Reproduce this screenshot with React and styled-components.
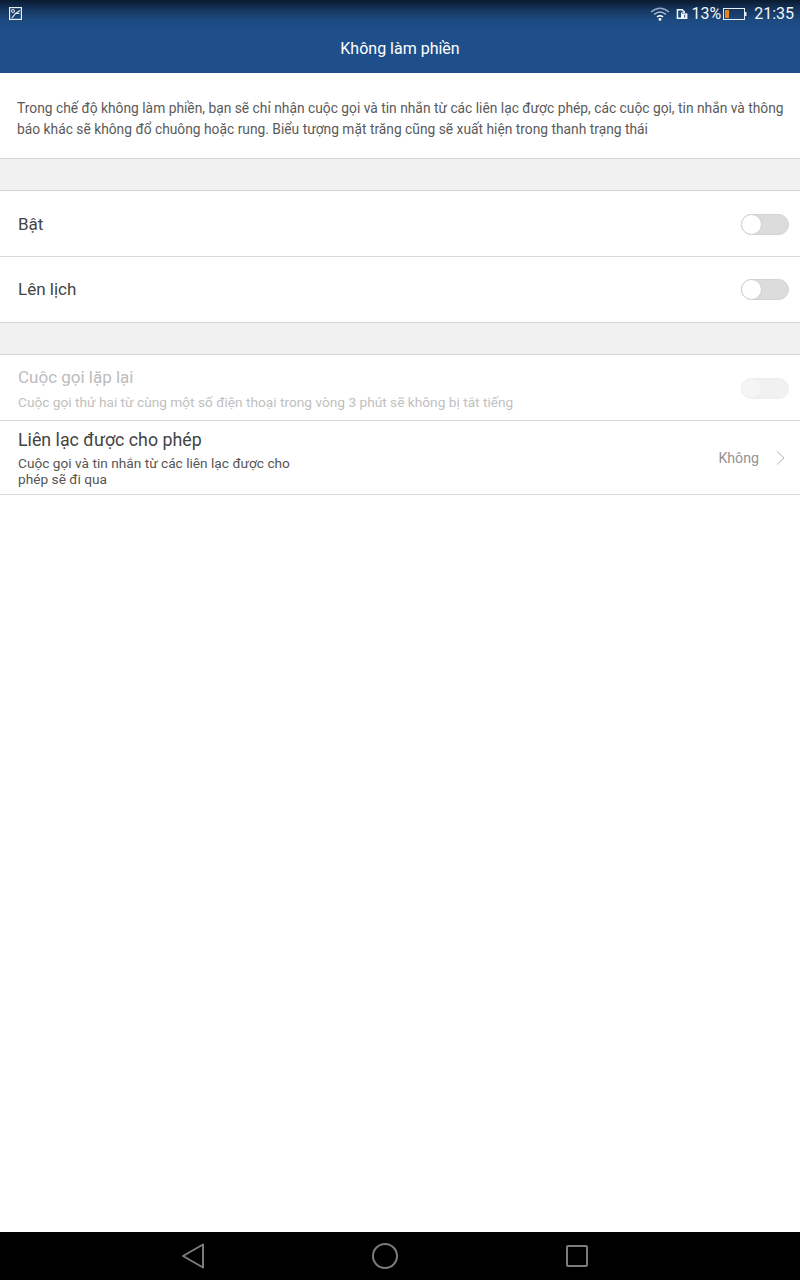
import styled, { createGlobalStyle } from "styled-components";

const GlobalStyle = createGlobalStyle`
  html, body {
    margin: 0;
    padding: 0;
    background: #fff;
    font-family: Roboto, "Noto Sans", sans-serif;
  }
`;

const Screen = styled.div`
  width: 800px;
  height: 1280px;
  display: flex;
  flex-direction: column;
  overflow: hidden;
  background: #fff;
`;

const Header = styled.header`
  height: 73px;
  flex: none;
  display: flex;
  flex-direction: column;
  background: linear-gradient(to bottom, #0b1a30 0, #16365f 10px, #1c4a80 20px, #1f4f8b 30px, #1f4f8b 73px);
`;

const StatusBar = styled.div`
  height: 27px;
  display: flex;
  align-items: center;
  justify-content: space-between;
  padding: 0 6px 0 9px;
  color: #fff;
`;

const StatusRight = styled.div`
  display: flex;
  align-items: center;
`;

const StatusIcon = styled.svg`
  display: block;
  flex: none;
  margin-left: ${(props) => props.$left || 0}px;
  margin-top: ${(props) => props.$top || 0}px;
`;

const StatusText = styled.span`
  font-size: 16px;
  line-height: 27px;
  color: #f2f5f9;
  margin-left: ${(props) => props.$left || 0}px;
`;

const Title = styled.h1`
  margin: 0;
  height: 46px;
  font-size: 16px;
  font-weight: 400;
  line-height: 43px;
  text-align: center;
  color: #fff;
`;

const Intro = styled.p`
  margin: 0;
  height: 85px;
  box-sizing: border-box;
  padding: 25px 10px 0 17px;
  font-size: 13.8px;
  line-height: 21px;
  color: #5a5a5a;
`;

const Spacer = styled.div`
  height: 33px;
  flex: none;
  box-sizing: border-box;
  background: #f1f1f1;
  border-top: 1px solid #d4d4d4;
  border-bottom: 1px solid #d4d4d4;
`;

const Row = styled.div`
  height: ${(props) => props.$height}px;
  flex: none;
  box-sizing: border-box;
  display: flex;
  align-items: center;
  justify-content: space-between;
  padding: ${(props) => props.$nudge || 0}px 11px ${(props) => props.$lift || 0}px 18px;
  border-bottom: ${(props) => (props.$last ? "none" : "1px solid #d9d9d9")};
`;

const RowText = styled.div`
  display: flex;
  flex-direction: column;
`;

const RowTitle = styled.div`
  font-size: ${(props) => props.$size || 17}px;
  line-height: 22px;
  color: ${(props) => (props.$disabled ? "#bcbcbc" : "#444")};
`;

const RowNote = styled.div`
  font-size: 13.7px;
  line-height: ${(props) => (props.$disabled ? 17 : 16)}px;
  margin-top: ${(props) => (props.$disabled ? 6 : 4)}px;
  max-width: ${(props) => props.$width || 600}px;
  color: ${(props) => (props.$disabled ? "#c0c0c0" : "#555")};
`;

const Toggle = styled.div`
  position: relative;
  width: 48px;
  height: 21px;
  box-sizing: border-box;
  border-radius: 11px;
  background: ${(props) => (props.$disabled ? "#f1f1f1" : "#dcdcdc")};
  border: 1px solid ${(props) => (props.$disabled ? "#ededed" : "#d2d2d2")};

  &::before {
    content: "";
    position: absolute;
    left: -1px;
    top: -1px;
    width: 21px;
    height: 21px;
    box-sizing: border-box;
    border-radius: 50%;
    background: ${(props) => (props.$disabled ? "#f5f5f5" : "#fff")};
    border: 1px solid ${(props) => (props.$disabled ? "#f0f0f0" : "#cfcfcf")};
  }
`;

const ValueLink = styled.div`
  display: flex;
  align-items: center;
  gap: 17px;
  font-size: 14.2px;
  color: #939393;
  padding-right: 4px;
`;

const Filler = styled.div`
  flex: 1;
  border-top: 1px solid #d9d9d9;
`;

const NavBar = styled.nav`
  height: 48px;
  flex: none;
  background: #000;
  display: flex;
  align-items: center;
  padding-left: 181px;
  gap: 166px;
`;

const NavButton = styled.svg`
  display: block;
  flex: none;
  fill: none;
  stroke: #7c7c7c;
  stroke-width: 2;
  stroke-linejoin: round;
`;

const SettingsRow = ({ title, titleSize, note, disabled, noteWidth, height, nudge, lift, last, children }) => (
  <Row $height={height} $nudge={nudge} $lift={lift} $last={last}>
    <RowText>
      <RowTitle $disabled={disabled} $size={titleSize}>
        {title}
      </RowTitle>
      {note && (
        <RowNote $disabled={disabled} $width={noteWidth}>
          {note}
        </RowNote>
      )}
    </RowText>
    {children}
  </Row>
);

const App = () => {
  return (
    <Screen>
      <GlobalStyle />
      <Header>
        <StatusBar>
          <StatusIcon width="13" height="13" viewBox="0 0 13 13" $top={-1}>
            <rect x="0.6" y="0.6" width="11.8" height="11.8" fill="none" stroke="#e8eef6" strokeWidth="1.2" />
            <circle cx="4" cy="4" r="1.5" fill="none" stroke="#e8eef6" />
            <path d="M3 11 L6.5 6.5 L11 3.5 M6.5 6.5 H10.5" fill="none" stroke="#e8eef6" strokeWidth="1.2" />
          </StatusIcon>
          <StatusRight>
            <StatusIcon width="20" height="14" viewBox="0 0 20 14" $left={1}>
              <path d="M1 5 Q10 -2.5 19 5" fill="none" stroke="#8fa6c4" strokeWidth="1.6" />
              <path d="M4 7.5 Q10 2.5 16 7.5" fill="none" stroke="#aebfd4" strokeWidth="1.6" />
              <path d="M7 10 Q10 7.5 13 10" fill="none" stroke="#fff" strokeWidth="1.6" />
              <circle cx="10" cy="12.4" r="1.4" fill="#fff" />
            </StatusIcon>
            <StatusIcon width="12" height="12" viewBox="0 0 12 12" $left={6}>
              <path d="M0.7 1 H6.5 L9 3.5 V5 H6 V11 H0.7 Z" fill="#f2f5f9" />
              <path d="M2.2 2.4 H5.8 L7.4 4 V4.6 H5 V9.6 H2.2 Z" fill="#1c4673" />
              <rect x="6" y="5.4" width="5.4" height="5.6" fill="#f2f5f9" />
              <rect x="8.2" y="6.8" width="1" height="2.8" fill="#1f4f8b" />
            </StatusIcon>
            <StatusText $left={3}>13%</StatusText>
            <StatusIcon width="24" height="12" viewBox="0 0 24 12" $left={2}>
              <rect x="0.5" y="0.5" width="21" height="11" fill="none" stroke="#e8eef6" />
              <rect x="2" y="2" width="4" height="8" fill="#e8861d" />
              <rect x="22" y="4" width="1.5" height="4" fill="#e8eef6" />
            </StatusIcon>
            <StatusText $left={7}>21:35</StatusText>
          </StatusRight>
        </StatusBar>
        <Title>Không làm phiền</Title>
      </Header>

      <Intro>
        Trong chế độ không làm phiền, bạn sẽ chỉ nhận cuộc gọi và tin nhắn từ các liên lạc được phép, các cuộc gọi, tin nhắn và thông báo khác sẽ không đổ chuông hoặc rung. Biểu tượng mặt trăng cũng sẽ xuất hiện trong thanh trạng thái
      </Intro>

      <Spacer />
      <SettingsRow title="Bật" height={66} nudge={1}>
        <Toggle />
      </SettingsRow>
      <SettingsRow title="Lên lịch" height={65} lift={1} last>
        <Toggle />
      </SettingsRow>
      <Spacer />
      <SettingsRow
        title="Cuộc gọi lặp lại"
        note="Cuộc gọi thứ hai từ cùng một số điện thoại trong vòng 3 phút sẽ không bị tắt tiếng"
        height={66}
        nudge={1}
        disabled
      >
        <Toggle $disabled />
      </SettingsRow>
      <SettingsRow
        title="Liên lạc được cho phép"
        titleSize={17.8}
        note="Cuộc gọi và tin nhắn từ các liên lạc được cho phép sẽ đi qua"
        noteWidth={290}
        height={73}
        last
      >
        <ValueLink>
          Không
          <svg width="9" height="14" viewBox="0 0 9 14">
            <path d="M1 0.5 L8 7 L1 13.5" fill="none" stroke="#b0b0b0" strokeWidth="1" />
          </svg>
        </ValueLink>
      </SettingsRow>
      <Filler />

      <NavBar>
        <NavButton width="24" height="28" viewBox="0 0 24 28">
          <path d="M22 2.5 V25.5 L2 14 Z" />
        </NavButton>
        <NavButton width="28" height="28" viewBox="0 0 28 28">
          <circle cx="14" cy="14" r="12" />
        </NavButton>
        <NavButton width="24" height="24" viewBox="0 0 24 24">
          <rect x="2" y="2" width="20" height="20" rx="1" />
        </NavButton>
      </NavBar>
    </Screen>
  );
};

export default App;
